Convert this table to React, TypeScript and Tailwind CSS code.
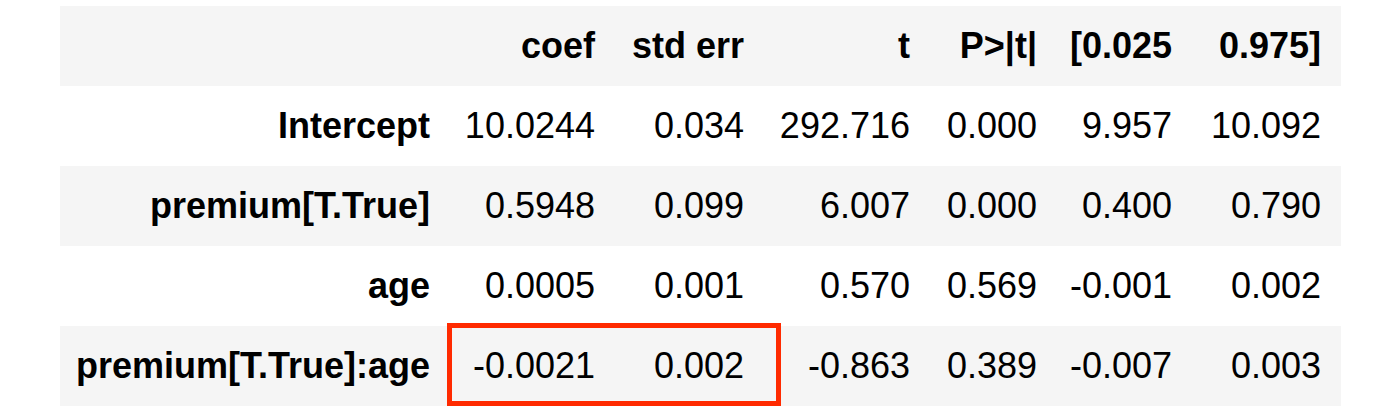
const columns = ['coef', 'std err', 't', 'P>|t|', '[0.025', '0.975]'];

const rows = [
  { name: 'Intercept', values: ['10.0244', '0.034', '292.716', '0.000', '9.957', '10.092'] },
  { name: 'premium[T.True]', values: ['0.5948', '0.099', '6.007', '0.000', '0.400', '0.790'] },
  { name: 'age', values: ['0.0005', '0.001', '0.570', '0.569', '-0.001', '0.002'] },
  { name: 'premium[T.True]:age', values: ['-0.0021', '0.002', '-0.863', '0.389', '-0.007', '0.003'], highlight: true },
];

const grid = 'grid grid-cols-[390px_165px_149px_166px_127px_135px_149px] h-[80px] items-center';

export default function App() {
  return (
    <div className="min-h-screen bg-white pt-[6px] pl-[60px] font-['Liberation_Sans',Arial,sans-serif] text-[36px] text-black leading-none">
      <div className="w-[1281px]">
        {/* Header */}
        <div className={`${grid} bg-[#f5f5f5] font-bold`}>
          <div />
          {columns.map(col => (
            <div key={col} className="text-right pr-[20px]">{col}</div>
          ))}
        </div>

        {rows.map((row, i) => (
          <div key={row.name} className={`${grid} relative ${i % 2 === 1 ? 'bg-[#f5f5f5]' : 'bg-white'}`}>
            <div className="text-right pr-[20px] font-bold">{row.name}</div>
            {row.values.map((v, j) => (
              <div key={j} className="text-right pr-[20px]">{v}</div>
            ))}
            {row.highlight && (
              <div className="absolute left-[387px] top-[-3px] w-[334px] h-[83px] border-[5px] border-[#ff2a00]" />
            )}
          </div>
        ))}
      </div>
    </div>
  );
}
